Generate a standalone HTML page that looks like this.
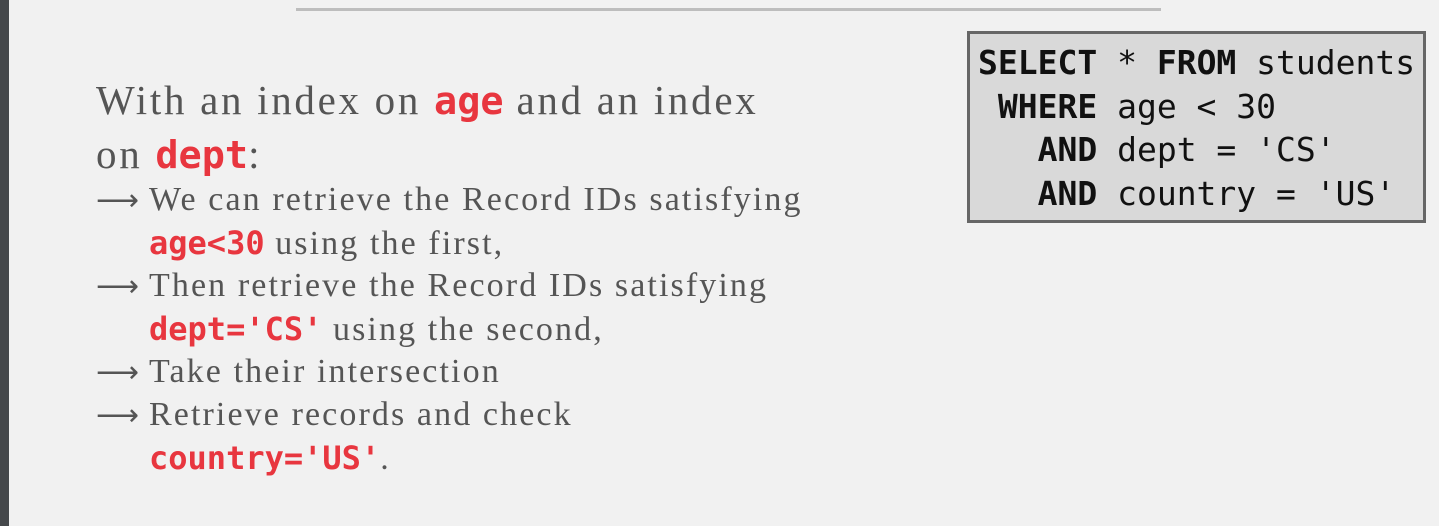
<!DOCTYPE html>
<html><head><meta charset="utf-8"><style>
html,body{margin:0;padding:0}
body{width:1439px;height:526px;overflow:hidden;background:#f1f1f1;position:relative;font-family:"Liberation Serif",serif;color:#555}
.side{position:absolute;left:0;top:0;width:9px;height:526px;background:#45484b}
.rule{position:absolute;left:296px;top:8px;width:865px;height:3px;background:#bdbdbd}
.m{font-family:"DejaVu Sans Mono","Liberation Mono",monospace;font-weight:bold;color:#e8363f;letter-spacing:0}
.title{position:absolute;left:96px;top:74px;font-size:41px;letter-spacing:2.7px;line-height:53px;width:760px;white-space:nowrap}
.title .m{font-size:38.5px}
.b{position:absolute;left:96px;font-size:34px;letter-spacing:2.1px;line-height:43px;white-space:nowrap}
.b .a{display:inline-block;width:53px;font-family:"DejaVu Sans",sans-serif;font-size:30px;letter-spacing:0}
.b .m{font-size:32px}
.ind{padding-left:53px}
.box{position:absolute;left:967px;top:31px;width:453px;height:186px;background:#d9d9d9;border:3px solid #666;box-sizing:content-box}
.box pre{margin:0;position:absolute;left:8px;top:7px;font-family:"DejaVu Sans Mono","Liberation Mono",monospace;font-size:33px;line-height:43.5px;color:#111}
.box b{font-weight:bold}
</style></head><body>
<div class="side"></div>
<div class="rule"></div>
<div class="title">With an index on <span class="m">age</span> and an index<br>on <span class="m">dept</span>:</div>
<div class="b" style="top:178px"><span class="a">⟶</span>We can retrieve the Record IDs satisfying<br><span class="ind"><span class="m">age&lt;30</span> using the first,</span></div>
<div class="b" style="top:264px"><span class="a">⟶</span>Then retrieve the Record IDs satisfying<br><span class="ind"><span class="m">dept='CS'</span> using the second,</span></div>
<div class="b" style="top:350px"><span class="a">⟶</span>Take their intersection</div>
<div class="b" style="top:393px"><span class="a">⟶</span>Retrieve records and check<br><span class="ind"><span class="m">country='US'</span>.</span></div>
<div class="box"><pre><b>SELECT</b> * <b>FROM</b> students
 <b>WHERE</b> age &lt; 30
   <b>AND</b> dept = 'CS'
   <b>AND</b> country = 'US'</pre></div>
</body></html>
